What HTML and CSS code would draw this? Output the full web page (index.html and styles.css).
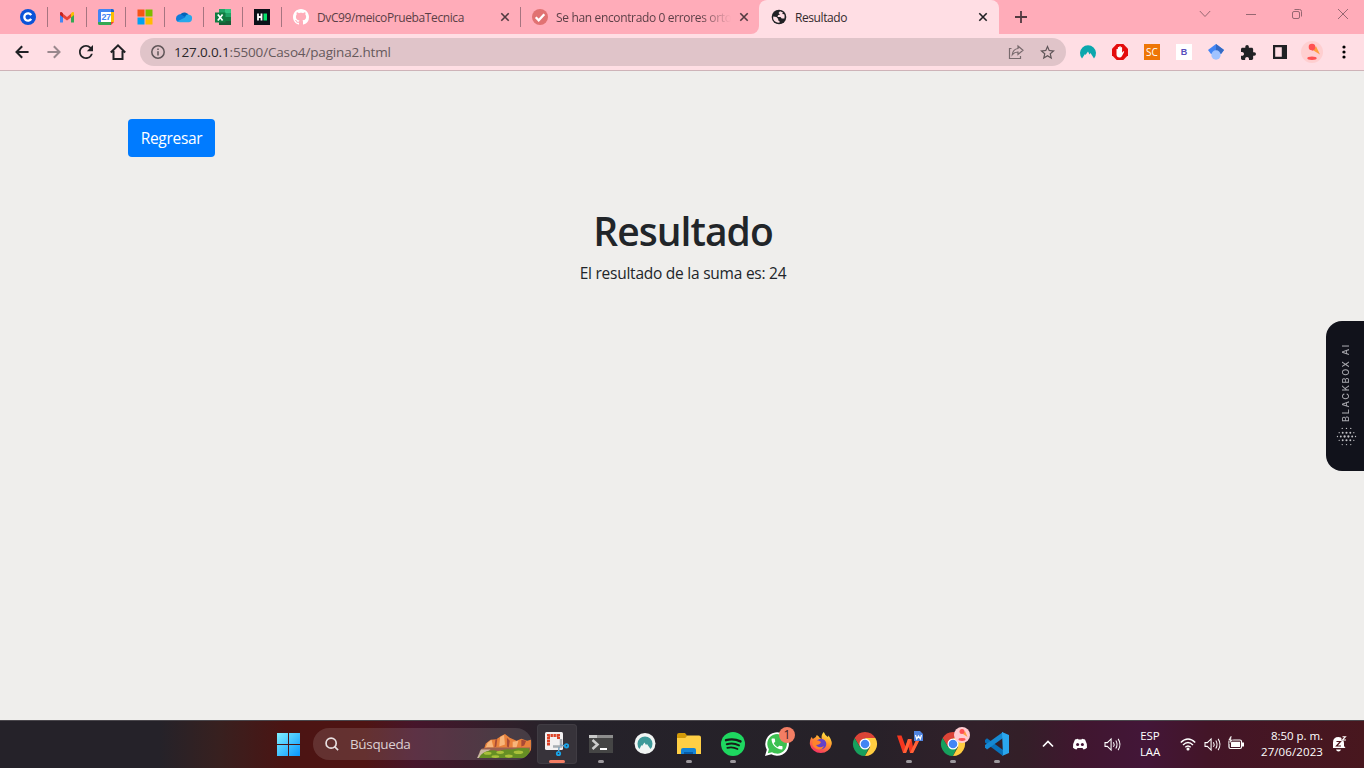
FILE: index.html
```html
<!DOCTYPE html>
<html lang="es">
<head>
<meta charset="utf-8">
<title>Resultado</title>
<link rel="stylesheet" href="styles.css">
</head>
<body>
<div class="screen">
  <header class="tabs">
    <div class="tab pinned"><svg class="i16" viewBox="0 0 16 16"><circle cx="8" cy="8" r="8" fill="#0b53d8"/><path d="M11.2 6.1a3.7 3.7 0 1 0 0 3.8" fill="none" stroke="#fff" stroke-width="2.3"/></svg></div>
    <div class="tab pinned"><svg class="i16" viewBox="0 0 16 16"><path d="M1 4.5v9h3V7z" fill="#4285f4"/><path d="M12 7v6.5h3v-9z" fill="#34a853"/><path d="M1 4v2l3 2.500V4.200L2.800 3.200C2 2.600 1 3 1 4z" fill="#c5221f"/><path d="M4 4.800 8 8l4-3.200v3.700l-4 3-4-3z" fill="#ea4335"/><path d="M12 4.200v4.300L15 6V4c0-1-1-1.400-1.800-.8z" fill="#fbbc04"/></svg></div>
    <div class="tab pinned"><svg class="i16" viewBox="0 0 16 16"><path d="M0 1.500Q0 0 1.500 0H13v3H3v10H0z" fill="#4285f4"/><path d="M13 0h1.500Q16 0 16 1.500V3h-3z" fill="#1967d2"/><path d="M13 3h3v10h-3z" fill="#fbbc04"/><path d="M0 13h13v3H1.500Q0 16 0 14.500z" fill="#34a853"/><path d="M13 13h3l-3 3z" fill="#ea4335"/><path d="M3 3h10v10H3z" fill="#fff"/><text x="8" y="11.200" class="cal">27</text></svg></div>
    <div class="tab pinned"><svg class="i16" viewBox="0 0 16 16"><path d="M.5.5h7v7h-7z" fill="#f65314"/><path d="M8.500.5h7v7h-7z" fill="#7cbb00"/><path d="M.5 8.500h7v7h-7z" fill="#00a1f1"/><path d="M8.500 8.500h7v7h-7z" fill="#ffbb00"/></svg></div>
    <div class="tab pinned"><svg class="i16" viewBox="0 0 16 16"><path d="M4.300 5.500A5 5 0 0 1 13 6.800l-1 4-9 1z" fill="#0364b8"/><path d="M0 9.500a4 4 0 0 1 6-3.600l5 3-8 4.200A3.600 3.600 0 0 1 0 9.500z" fill="#0f7bd8"/><path d="M9 8.500a3.500 3.500 0 0 1 7 1.300c0 2-1.300 3.400-3.300 3.400H4q-1.500 0-2.500-1z" fill="#28a8ea"/></svg></div>
    <div class="tab pinned"><svg class="i16" viewBox="0 0 16 16"><path d="M4 0h12v16H4z" fill="#185c37"/><path d="M4 0h6v4H4z" fill="#21a366"/><path d="M10 0h6v4h-6z" fill="#33c481"/><path d="M10 4h6v4h-6z" fill="#21a366"/><path d="M10 8h6v4h-6z" fill="#107c41"/><path d="M0 3.500h10.500v10H0z" fill="#107c41"/><path d="m2.800 5.500 4.800 6M7.600 5.500l-4.800 6" stroke="#fff" stroke-width="1.700"/></svg></div>
    <div class="tab pinned"><svg class="i16" viewBox="0 0 16 16"><path d="M0 0h16v16H0z" fill="#0b1018"/><path d="M4 4.500v7M7.500 4.500v7M4 8h3.500" stroke="#fff" stroke-width="1.800"/><path d="M9.500 4.500H13v7H9.500z" fill="#05e36b"/></svg></div>
    <div class="tab wide">
      <svg class="i16" viewBox="0 0 16 16"><path fill="#fff" d="M8 0C3.580 0 0 3.580 0 8c0 3.540 2.290 6.530 5.470 7.590.4.070.55-.17.55-.38 0-.19-.01-.82-.01-1.490-2.010.37-2.530-.49-2.690-.94-.09-.23-.48-.94-.82-1.130-.28-.15-.68-.52-.01-.53.63-.01 1.080.58 1.230.82.72 1.210 1.870.87 2.330.66.070-.52.28-.87.51-1.070-1.780-.2-3.640-.89-3.640-3.950 0-.87.31-1.590.82-2.150-.08-.2-.36-1.020.08-2.120 0 0 .67-.21 2.200.82.64-.18 1.320-.27 2-.27s1.360.09 2 .27c1.530-1.040 2.200-.82 2.200-.82.44 1.100.16 1.920.08 2.120.51.56.82 1.270.82 2.150 0 3.070-1.870 3.750-3.650 3.950.29.25.54.73.54 1.480 0 1.070-.01 1.930-.01 2.200 0 .21.15.46.55.38A8.010 8.010 0 0 0 16 8c0-4.420-3.580-8-8-8z"/></svg>
      <span class="title t-git">DvC99/meicoPruebaTecnica</span>
      <svg class="close" viewBox="0 0 10 10"><path d="m1.300 1.300 7.400 7.400M8.700 1.300 1.300 8.700"/></svg>
    </div>
    <div class="tab wide second">
      <svg class="i16" viewBox="0 0 16 16"><circle cx="8" cy="8" r="8" fill="#e17272"/><path d="m3.700 8.300 3 3 5.600-6" fill="none" stroke="#fff" stroke-width="2.300"/></svg>
      <span class="title faded t-err">Se han encontrado 0 errores orto</span>
      <svg class="close" viewBox="0 0 10 10"><path d="m1.300 1.300 7.400 7.400M8.700 1.300 1.300 8.700"/></svg>
    </div>
    <div class="tab active">
      <svg class="i16" viewBox="0 0 16 16"><circle cx="8" cy="8" r="7.300" fill="#202124"/><path d="M9 2.200 7.500 4l1.500 1.500-2 .8-.5 1.700h3l1.200 1.500h2.700q.8-2-.2-4.300l-2-.2L12 3.500z" fill="#ffdee4"/><path d="M2.200 7.500 5.500 8l1.700 2v1.500l1.300.5v1.800Q4 14 2.200 10z" fill="#ffdee4"/></svg>
      <span class="title t-res">Resultado</span>
      <svg class="close" viewBox="0 0 10 10"><path d="m1.300 1.300 7.400 7.400M8.700 1.300 1.300 8.700"/></svg>
    </div>
    <svg class="plus" viewBox="0 0 12 12"><path d="M6 0v12M0 6h12"/></svg>
    <div class="winctl">
      <span><svg viewBox="0 0 12 12"><path d="m.8 3 5.200 5.500L11.200 3"/></svg></span>
      <span><svg viewBox="0 0 12 12"><path d="M1 6.500h10"/></svg></span>
      <span><svg viewBox="0 0 12 12"><rect x="1.500" y="3.500" width="7" height="7" rx="1.500"/><path d="M3.500 1.500h5q2 0 2 2v5"/></svg></span>
      <span><svg viewBox="0 0 12 12"><path d="m1 1 10 10M11 1 1 11"/></svg></span>
    </div>
  </header>

  <nav class="toolbar">
    <span class="nav"><svg viewBox="0 0 16 16"><path d="M15.500 8H2M8.200 1.500 1.700 8l6.500 6.500"/></svg></span>
    <span class="nav dim"><svg viewBox="0 0 16 16"><path d="M.5 8H14M7.800 1.500 14.300 8l-6.500 6.500"/></svg></span>
    <span class="nav"><svg viewBox="4 4 16 16"><path class="solid" d="M17.650 6.350A7.958 7.958 0 0 0 12 4c-4.420 0-7.990 3.580-7.990 8s3.570 8 7.990 8c3.730 0 6.840-2.550 7.730-6h-2.080A5.990 5.990 0 0 1 12 18c-3.310 0-6-2.690-6-6s2.690-6 6-6c1.660 0 3.140.69 4.220 1.780L13 11h7V4z"/></svg></span>
    <span class="nav home"><svg viewBox="0 0 16 16"><path d="M.8 8.500 8 1.300l7.200 7.200M3.500 7v8h9V7"/></svg></span>
    <div class="omnibox">
      <svg class="info" viewBox="0 0 14 14"><circle cx="7" cy="7" r="6.200"/><path d="M7 6.200v4.300M7 3.500v1.600"/></svg>
      <span class="url"><b>127.0.0.1</b>:5500/Caso4/pagina2.html</span>
      <svg class="share" viewBox="0 0 16 16"><path d="M3.500 4.500h-2v10h11V12M10 2l5 4.300-5 4.200V8q-3.500 0-5.700 2.700Q5 5 10 4.500z"/></svg>
      <svg class="star" viewBox="2 2 20 20"><path d="m22 9.240-7.190-.62L12 2 9.190 8.630 2 9.240l5.460 4.730L5.820 21 12 17.270 18.180 21l-1.630-7.030zM12 15.400l-3.760 2.270 1-4.280-3.320-2.880 4.380-.38L12 6.100l1.710 4.040 4.380.38-3.320 2.880 1 4.280z"/></svg>
    </div>
    <div class="exts">
      <span><svg class="i16" viewBox="0 0 16 16"><path d="M2 14.500A8 8 0 1 1 14 14.500L10.500 9 9.500 10.500 8 7.500 5.500 11 5 10z" fill="#0ca7ad"/></svg></span>
      <span><svg class="i16" viewBox="0 0 16 16"><path d="M4.700 0h6.600L16 4.700v6.600L11.300 16H4.700L0 11.300V4.700z" fill="#e40d0d"/><path d="M4.500 5.200q.8-.8 1.400 0V3.300q.8-.8 1.400 0v-.8q.8-.8 1.400 0v1q.8-.8 1.400 0v5.200l1.200-1.500q1.200-.2.800.8L10 12q-.8 1.500-2.500 1.500-2.800 0-3-3z" fill="#fff"/></svg></span>
      <span><i class="badge sc">SC</i></span>
      <span><i class="badge bb">B</i></span>
      <span><svg class="i16" viewBox="0 0 16 16"><path d="m8 0 8 6-3 4H3L0 6z" fill="#4285f4"/><path d="m8 0 8 6-3 4-5-3z" fill="#356ac3"/><circle cx="8" cy="11" r="4.700" fill="#a0c3ff"/></svg></span>
      <span><svg class="puz" viewBox="2 1 21 21"><path d="M20.500 11H19V7c0-1.100-.9-2-2-2h-4V3.500a2.500 2.500 0 0 0-5 0V5H4c-1.100 0-1.990.9-1.990 2v3.800H3.500c1.490 0 2.700 1.210 2.700 2.700s-1.210 2.700-2.700 2.700H2V20c0 1.100.9 2 2 2h3.800v-1.500c0-1.490 1.210-2.700 2.700-2.700s2.700 1.210 2.700 2.700V22H17c1.100 0 2-.9 2-2v-4h1.500a2.500 2.500 0 0 0 0-5z" fill="#202124"/></svg></span>
      <span><svg class="i16" viewBox="0 0 16 16"><path d="M1 1h14v14H1zM3.200 3.200v9.600h6.600V3.200z" fill="#202124" fill-rule="evenodd"/></svg></span>
      <span><svg class="ava" viewBox="0 0 22 22"><circle cx="11" cy="11" r="11" fill="#ffcfd0"/><path d="m12 9.300 3-4L19 13.500z" fill="#ff9e3d"/><circle cx="11" cy="6" r="3.300" fill="#ff5252"/><path d="m8.500 8 3.300 1.700 2.200-2.500z" fill="#ff5252"/><ellipse cx="11" cy="17.300" rx="4.700" ry="1.700" fill="#ff5252"/></svg></span>
      <span class="more"><svg class="i16" viewBox="0 0 16 16"><circle cx="8" cy="3" r="1.600"/><circle cx="8" cy="8" r="1.600"/><circle cx="8" cy="13" r="1.600"/></svg></span>
    </div>
  </nav>

  <main class="page">
    <a class="btn"><span>Regresar</span></a>
    <h1>Resultado</h1>
    <p>El resultado de la suma es: 24</p>
    <aside class="blackbox">
      <span>BLACKBOX AI</span>
      <svg viewBox="0 0 20 20"><g fill="#c4c4c8"><circle cx="4" cy="10" r="1"/><circle cx="8" cy="10" r="1.200"/><circle cx="12" cy="10" r="1.200"/><circle cx="16" cy="10" r="1"/><circle cx="6" cy="6" r="1"/><circle cx="10" cy="6" r="1.100"/><circle cx="14" cy="6" r="1"/><circle cx="6" cy="14" r="1"/><circle cx="10" cy="14" r="1.100"/><circle cx="14" cy="14" r="1"/><circle cx="5.500" cy="1.500" r=".7"/><circle cx="10" cy="1.500" r=".7"/><circle cx="14.500" cy="1.500" r=".7"/><circle cx="5.500" cy="18.500" r=".7"/><circle cx="10" cy="18.500" r=".7"/><circle cx="14.500" cy="18.500" r=".7"/><circle cx=".5" cy="10" r=".7"/><circle cx="19.500" cy="10" r=".7"/><circle cx="2.300" cy="6" r=".7"/><circle cx="17.700" cy="6" r=".7"/><circle cx="2.300" cy="14" r=".7"/><circle cx="17.700" cy="14" r=".7"/></g></svg>
    </aside>
  </main>

  <footer class="taskbar">
    <div class="start"><svg viewBox="0 0 23 23"><defs><linearGradient id="win" x2="1" y2="1"><stop stop-color="#80f0ff"/><stop offset="1" stop-color="#0795ff"/></linearGradient></defs><path fill="url(#win)" d="M0 0h11v11H0zM12 0h11v11H12zM0 12h11v11H0zM12 12h11v11H12z"/></svg></div>
    <div class="search">
      <svg class="lens" viewBox="0 0 16 16"><circle cx="7" cy="7" r="5.800"/><path d="m11 11 4 4"/></svg>
      <span>Búsqueda</span>
      <svg class="scene" viewBox="0 0 57 26"><path d="M7 16 9 10l5-4 6-.5 5-3.500 4-2 5 4 7 3 5-2 6 2 4-1v13H4z" fill="#e9823c"/><path d="m11 9 4-3 2 8H9zM24 3l4-2 1 10-6 2zM37 8l6-1-2 7h-4z" fill="#f8b57a"/><path d="m19 6 2-1-1 8-2 1zM31 4l3 3-1 7-2-1zM46 6l5 1-2 5-3 1z" fill="#a94a35"/><path d="m5 15 6-1h44v3L44 19H2z" fill="#9c6050"/><path d="M4 16h10L2 25H0z" fill="#cbb7a1"/><path d="M2 25q2-5 8-7 7-2 12 0 7-3 14-2 10-2 18-1l1 4-5 6z" fill="#668f24"/><g fill="#a9c03a"><ellipse cx="11" cy="20" rx="4" ry="1.600"/><ellipse cx="24" cy="19" rx="4" ry="1.700"/><ellipse cx="19" cy="23.500" rx="4" ry="1.500"/><ellipse cx="33" cy="23" rx="4" ry="1.600"/><ellipse cx="43" cy="19" rx="5" ry="1.800"/></g></svg>
    </div>
    <div class="apps">
      <div class="app current"><svg viewBox="0 0 24 24"><rect width="18" height="18" rx="1.500" fill="#f3f1f2"/><path d="M3.500 13.500v-10h10v4" fill="none" stroke="#dc4226" stroke-width="3" stroke-dasharray="2.400 .6"/><path d="M8 14.500h8V7" fill="none" stroke="#a7adb3" stroke-width="2.500"/><path d="m15 13 5 1M14 15l-.3 4" stroke="#7da2bd" stroke-width="1.500"/><g fill="none" stroke="#18a4e9" stroke-width="1.800"><circle cx="21.500" cy="13.800" r="1.700"/><circle cx="13.500" cy="21.500" r="1.700"/></g></svg><i class="mark on"></i></div>
      <div class="app"><svg viewBox="0 0 24 24"><path d="M0 3h24v18H0z" fill="#454545"/><path d="M0 3h24v3H0z" fill="#8d8d8d"/><path d="M0 3h8v3H0z" fill="#c8c8c8"/><path d="m3.500 8 5 4.500-5 4.500" fill="none" stroke="#ccc" stroke-width="2.500"/><path d="M11 17h7" stroke="#fff" stroke-width="2"/></svg><i class="mark"></i></div>
      <div class="app"><svg viewBox="0 0 24 24"><circle cx="12" cy="11.500" r="10.500" fill="#f1f5f4"/><path d="M6.500 17a7.500 7.500 0 1 1 11 0L14 12l-1 1-1.500-2.500L9 14l-.5-1z" fill="#3e9999"/></svg></div>
      <div class="app"><svg viewBox="0 0 24 24"><path d="M0 3Q0 1 2 1h6l2 2.500-2 3H0z" fill="#d39a08"/><path d="M0 6h8l2-2.500h12q2 0 2 2V22H0z" fill="#ffcf45"/><path d="M4 22v-4q0-2 2-2h11q2 0 2 2v4z" fill="#1584d6"/><path d="M7 20h9v2H7z" fill="#075da9"/></svg><i class="mark"></i></div>
      <div class="app"><svg viewBox="0 0 24 24"><circle cx="12" cy="12" r="12" fill="#1ed760"/><g fill="none" stroke="#171d1a" stroke-linecap="round"><path d="M5 8.200q7.500-2.200 14.500 1.200" stroke-width="2.400"/><path d="M5.800 12.200q6.400-1.900 12.200 1.200" stroke-width="2"/><path d="M6.300 15.900q5.400-1.400 10.200 1.200" stroke-width="1.700"/></g></svg><i class="mark"></i></div>
      <div class="app"><svg viewBox="0 0 24 24"><path d="m0 24 1.800-6.200A11.800 11.800 0 1 1 6.300 22.300z" fill="#fff"/><path d="m2.800 21.200 1.100-4A9.800 9.800 0 1 1 7 20.200z" fill="#3dc151"/><path transform="translate(4.700 4.600) scale(.61)" fill="#fff" d="M6.620 10.790c1.440 2.830 3.760 5.140 6.590 6.590l2.200-2.200c.27-.27.67-.36 1.020-.24 1.120.37 2.330.57 3.570.57.55 0 1 .45 1 1V20c0 .55-.45 1-1 1-9.390 0-17-7.610-17-17 0-.55.45-1 1-1h3.500c.55 0 1 .45 1 1 0 1.250.2 2.450.57 3.570.11.35.03.74-.25 1.020z"/></svg><b class="count">1</b></div>
      <div class="app"><svg viewBox="0 0 24 24"><defs><linearGradient id="fox" x1=".8" x2=".3" y2="1"><stop stop-color="#fff044"/><stop offset=".45" stop-color="#ff972e"/><stop offset="1" stop-color="#f52c65"/></linearGradient></defs><path d="M.8 12q0-5 2-7l1 2 3-2 1-2q2 1 3 3l2 1q-1-4 2-7 1 3 4 5 1-1 0-2 4 4 4 9a11.200 11.200 0 0 1-22 0z" fill="url(#fox)"/><circle cx="12" cy="12" r="5.300" fill="#6442c7"/><path d="M4 9q5-2 8 1-1 3-5 3 3 4 8 1-3 6-9 2-4-3-2-7z" fill="#ff832c"/></svg></div>
      <div class="app"><svg viewBox="0 0 24 24"><path d="M1.600 6A12 12 0 0 1 22.400 6H12L7 15z" fill="#db4437"/><path d="M1.600 6 7 15l9.500-.5L12 24A12 12 0 0 1 1.600 6z" fill="#17a05d"/><path d="M22.400 6A12 12 0 0 1 12 24l5-9-5-9z" fill="#ffcd40"/><circle cx="12" cy="12" r="5.500" fill="#fff"/><circle cx="12" cy="12" r="4.300" fill="#4285f4"/></svg></div>
      <div class="app"><svg viewBox="0 0 24 24"><path d="M0 3.500h4.500l4 11 2.500-7.500h3.500l1.500 8 3-6h3L16 21h-3l-1.500-6L9 21H6z" fill="#f5361f"/><path d="M6 21 11 7h3.500L9 21zM13 21l5.500-12H22l-6 12z" fill="#ff6238"/><path d="M17-1h6l3 3v7h-9z" fill="#4e83df"/><path d="m18.500 3 1.200 4L21.500 4l1.800 3 1.200-4" fill="none" stroke="#fff" stroke-width="1.200"/></svg><i class="mark"></i></div>
      <div class="app"><svg viewBox="0 0 24 24"><path d="M1.600 6A12 12 0 0 1 22.400 6H12L7 15z" fill="#db4437"/><path d="M1.600 6 7 15l9.500-.5L12 24A12 12 0 0 1 1.600 6z" fill="#17a05d"/><path d="M22.400 6A12 12 0 0 1 12 24l5-9-5-9z" fill="#ffcd40"/><circle cx="12" cy="12" r="5.500" fill="#fff"/><circle cx="12" cy="12" r="4.300" fill="#4285f4"/><circle cx="21" cy="3" r="8" fill="#ffcbd0"/><path d="m22 2 2-3 2.500 6z" fill="#ff9e3d"/><circle cx="21" cy="-.5" r="2.500" fill="#ff5252"/><ellipse cx="21" cy="7.500" rx="3.500" ry="1.400" fill="#ff5252"/></svg><i class="mark"></i></div>
      <div class="app"><svg viewBox="0 0 24 24"><path d="m0 8 2-1.700L18 18v6L0 10.500z" fill="#0871ba"/><path d="m0 15.500 2 2L18 6V0L0 13z" fill="#1689d2"/><path d="m17 0 7 3v18l-7 3 1-1z" fill="#2aa6ed"/></svg><i class="mark"></i></div>
    </div>
    <div class="tray">
      <span><svg class="line" viewBox="0 0 16 16"><path stroke-width="1.700" d="m3 10.500 5-5 5 5"/></svg></span>
      <span><svg class="i16" viewBox="0 0 16 16"><path d="M3 3.500 6 2.700l.5.900h3l.5-.9 3 .8q2.300 4 2 8.300-2 1.500-3.500 1.700l-1-1.500h-5l-1 1.500Q3 13.300 1 11.800.7 7.500 3 3.500z" fill="#fff"/><circle cx="5.600" cy="8.500" r="1.500" fill="#421535"/><circle cx="10.400" cy="8.500" r="1.500" fill="#421535"/></svg></span>
      <span><svg class="line spk" viewBox="0 0 18 16"><path d="M1 6h2.500L7.500 2v12l-4-4H1zM10 5.500q1.500 2.500 0 5M12.500 3.800q2.800 4.200 0 8.400M15 2q4 6 0 12"/></svg></span>
      <div class="lang"><span>ESP</span><span>LAA</span></div>
      <span class="status"><svg class="line" viewBox="0 0 16 16"><path stroke-width="1.400" d="M.8 6.500q7.200-7 14.400 0M3 9q5-5 10 0M5.300 11.300q2.700-2.600 5.400 0"/><circle cx="8" cy="13" r="1" fill="#fff"/></svg></span>
      <span class="status"><svg class="line spk" viewBox="0 0 18 16"><path d="M1 6h2.500L7.500 2v12l-4-4H1zM10 5.500q1.500 2.500 0 5M12.500 3.800q2.800 4.200 0 8.400M15 2q4 6 0 12"/></svg></span>
      <span class="status"><svg class="i16" viewBox="0 0 16 16"><rect x="1" y="4" width="12.500" height="8.500" rx="1.500" fill="none" stroke="#fff" stroke-width="1.200"/><path d="M3 5.700h9V11H3zM14 6.500h2v4h-2z" fill="#fff"/><path d="M2.500 0 0 4.500h2L1.500 8 5 3.500H3L4 0z" fill="#fff" stroke="#421522" stroke-width=".5"/></svg></span>
      <div class="clock"><span class="hour">8:50 p. m.</span><span class="date">27/06/2023</span></div>
      <svg class="bell" viewBox="0 0 16 16"><path d="M2 12V6.500Q2 1 7.500 1 12.500 1 13 7v3l1.500 2H.5zM5 13.500h5q-.5 2-2.500 2T5 13.500z" fill="#fff"/><path d="M5.500 5.500h4l-4 4.500h4.500" fill="none" stroke="#4b151c" stroke-width="1.200"/><path d="M10.500-1h5v5.500h-5z" fill="#4b151c"/><path d="M11.500.7h3l-3 3.300H15" fill="none" stroke="#fff" stroke-width="1.100"/></svg>
    </div>
  </footer>
</div>
</body>
</html>
```
FILE: styles.css
```css
* { box-sizing: border-box; }
body { margin: 0; overflow: hidden; font-family: "Open Sans", "Noto Sans", sans-serif; }
svg { display: block; flex: none; overflow: visible; }
span { white-space: nowrap; }
.screen { width: 1364px; height: 768px; display: flex; flex-direction: column; background: #efeeec; }
.i16 { width: 16px; height: 16px; }

/* Tab strip */
.tabs { height: 34px; flex: none; display: flex; align-items: center; padding-left: 9px; background: #ffacb9; }
.tab { height: 20px; display: flex; align-items: center; border-right: 1px solid #a67480; }
.pinned { width: 39px; justify-content: center; padding-left: 0; }
.cal { font: bold 9px "Liberation Sans", sans-serif; letter-spacing: -.4px; fill: #4285f4; text-anchor: middle; }
.wide { width: 239px; padding: 0 10px 0 11px; }
.second { width: 238px; height: 34px; border: 0; border-radius: 0 0 8px 0; background: #ffacb9; box-shadow: 4px 4px 0 -1px #ffdee4; clip-path: inset(0); }
.title { flex: 1; margin-left: 8px; font-size: 12px; color: #5b3f46; }
.t-git { letter-spacing: -.39px; }
.t-err { letter-spacing: -.35px; }
.t-res { letter-spacing: -.42px; }
.faded { flex: none; width: 175px; margin-right: 8px; mask-image: linear-gradient(90deg, #000 82%, transparent); }
.close { width: 10px; height: 10px; stroke: #513a40; stroke-width: 1.6; }
.active { width: 240px; height: 34px; border: 0; border-radius: 8px 8px 0 0; background: #ffdee4; padding: 0 11px 0 12px; }
.active .title { color: #342a2d; }
.active .close { stroke: #202124; }
.plus { width: 12px; height: 12px; margin-left: 16px; stroke: #513a40; stroke-width: 1.8; }
.winctl { margin-left: auto; margin-right: -2px; height: 34px; display: flex; align-items: flex-start; }
.winctl span { width: 46px; padding: 8px 17px; }
.winctl svg { width: 12px; height: 12px; fill: none; stroke: #966771; stroke-width: 1; }

/* Address bar */
.toolbar { height: 37px; flex: none; display: flex; align-items: center; padding-left: 6px; background: #ffdee4; border-bottom: 1px solid #ceb3b8; }
.nav { width: 32px; display: flex; justify-content: center; }
.nav svg { width: 14px; height: 14px; fill: none; stroke: #202124; stroke-width: 2.3; }
.home svg { width: 16px; height: 16px; stroke-width: 2; }
.nav .solid { fill: #202124; stroke: none; }
.dim { opacity: .45; }
.omnibox { width: 926px; height: 28px; margin-left: 6px; padding: 0 11px; display: flex; align-items: center; border-radius: 14px; background: #e0c4c9; }
.info { width: 14px; height: 14px; fill: none; stroke: #5f5558; stroke-width: 1.5; }
.url { flex: 1; margin-left: 9px; font-size: 13.500px; letter-spacing: -.16px; color: #66595c; }
.url b { font-weight: 400; color: #29272a; }
.share { width: 16px; height: 16px; margin-right: 16px; fill: none; stroke: #786a6d; stroke-width: 1.2; }
.star { width: 15px; height: 15px; fill: #5f5558; }
.exts { display: flex; padding-left: 6px; }
.exts > span { width: 32px; display: flex; align-items: center; justify-content: center; }
.puz { width: 15px; height: 15px; }
.ava { width: 22px; height: 22px; }
.badge { width: 16px; height: 16px; display: flex; align-items: center; justify-content: center; font-style: normal; font-size: 10px; }
.sc { background: #ee7606; color: #fff; }
.bb { background: #fff; color: #574ebc; font: bold 9px "Liberation Sans", sans-serif; }

/* Result page */
.page { position: relative; flex: 1; display: flex; flex-direction: column; align-items: center; padding-top: 48px; color: #212529; }
.btn { align-self: flex-start; width: 87px; height: 38px; margin-left: 128px; display: flex; align-items: center; justify-content: center; border-radius: 4px; background: #007bff; color: #fff; font-size: 15.500px; letter-spacing: -.3px; }
h1 { margin: 50px 0 0 2px; font-size: 39px; line-height: 48px; font-weight: 600; letter-spacing: -.95px; }
p { margin: 6px 0 0 2px; font-size: 15.500px; line-height: 24px; letter-spacing: -.24px; }
.blackbox { position: absolute; right: 0; top: 250px; width: 38px; height: 150px; padding-top: 22px; display: flex; flex-direction: column; align-items: center; gap: 5px; border-radius: 16px 0 0 16px; background: #11121b; color: #a7a7ad; }
.blackbox span { height: 79px; margin-left: 1px; writing-mode: vertical-rl; transform: rotate(180deg); font: 500 9px/12px Inter, sans-serif; letter-spacing: 1.75px; }
.blackbox svg { width: 19px; height: 19px; margin-left: 2px; }

/* Windows taskbar */
.taskbar { height: 48px; flex: none; display: flex; align-items: center; padding-left: 266px; box-shadow: inset 0 1px #4a474c; background: linear-gradient(90deg, #252229 0, #252229 160px, #38201f 220px, #4b1413 285px, #4f1413 365px, #46152b 415px, #2f202a 510px, #25222a 560px, #262128 860px, #32202a 980px, #331f28 1020px, #40162f 1080px, #431638 1145px, #431527 1210px, #48171e 1364px); color: #fff; }
.start { width: 44px; display: flex; justify-content: center; }
.start svg { width: 23px; height: 23px; }
.search { width: 219px; height: 32px; margin: 0 3px; display: flex; align-items: center; padding-left: 12px; border-radius: 16px; background: #ffffff20; overflow: hidden; font-size: 13.500px; letter-spacing: -.35px; color: #dccfd2; }
.lens { width: 14px; height: 14px; margin-right: 11px; fill: none; stroke: #e9e1e2; stroke-width: 1.9; }
.scene { width: 55px; height: 25px; margin: 4px 0 0 auto; }
.apps { display: flex; }
.app { position: relative; width: 44px; height: 40px; display: flex; justify-content: center; align-items: center; }
.app > svg { width: 24px; height: 24px; }
.current { width: 40px; margin: 0 2px; border-radius: 4px; background: #37333a; box-shadow: inset 0 0 0 1px #403c43; }
.mark { position: absolute; bottom: 1px; width: 6px; height: 3px; border-radius: 2px; background: #9c989d; }
.on { width: 16px; background: #f37e64; }
.count { position: absolute; right: 4px; top: 3px; width: 16px; height: 16px; border-radius: 50%; background: #f37e64; color: #382326; text-align: center; font: 12px/16px "Open Sans", sans-serif; }
.tray { display: flex; align-items: center; margin-left: 13px; }
.tray > span { width: 32px; display: flex; justify-content: center; }
.tray > .status { width: 24px; }
.line { width: 16px; height: 16px; fill: none; stroke: #fff; stroke-width: 1.100; }
.spk { width: 17px; height: 15px; }
.lang { width: 44px; margin-right: 4px; display: flex; flex-direction: column; align-items: center; font-size: 11.500px; line-height: 16px; letter-spacing: -.1px; }
.clock { width: 75px; display: flex; flex-direction: column; align-items: flex-end; font-size: 11.500px; line-height: 16px; letter-spacing: -.05px; }
.date { letter-spacing: .1px; }
.bell { width: 16px; height: 16px; margin-left: 8px; }
```
